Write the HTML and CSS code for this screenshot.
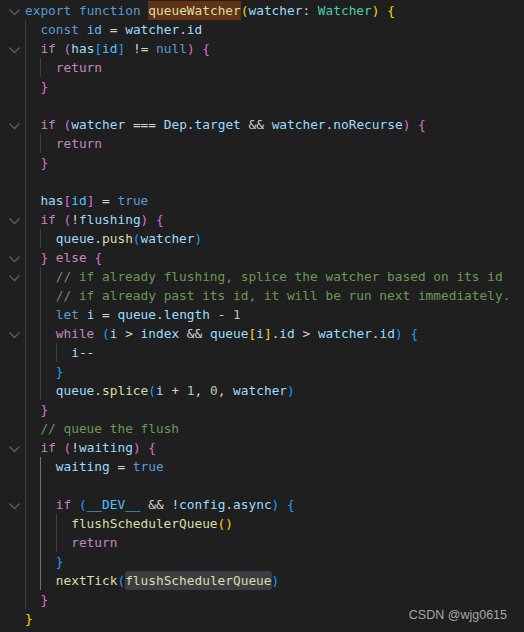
FILE: index.html
```html
<!DOCTYPE html>
<html>
<head>
<meta charset="utf-8">
<link rel="stylesheet" href="styles.css">
</head>
<body>
<div class="editor">
  <div class="ln"><span class="gut"><svg class="fold" viewBox="0 0 16 16"><polyline points="3.5,6.5 8.5,11.5 13.5,6.5"/></svg></span><span class="code"><span class="kw">export</span> <span class="kw">function</span> <span class="hl fn">queueWatcher</span><span class="b1">(</span><span class="v">watcher</span>: <span class="t">Watcher</span><span class="b1">)</span> <span class="b1">{</span></span></div>
  <div class="ln"><span class="gut"></span><span class="g"></span><span class="code"><span class="kw">const</span> <span class="c">id</span> = <span class="v">watcher</span>.<span class="v">id</span></span></div>
  <div class="ln"><span class="gut"><svg class="fold" viewBox="0 0 16 16"><polyline points="3.5,6.5 8.5,11.5 13.5,6.5"/></svg></span><span class="g"></span><span class="code"><span class="ctl">if</span> <span class="b2">(</span><span class="v">has</span><span class="b3">[</span><span class="c">id</span><span class="b3">]</span> != <span class="kw">null</span><span class="b2">)</span> <span class="b2">{</span></span></div>
  <div class="ln"><span class="gut"></span><span class="g"></span><span class="g"></span><span class="code"><span class="ctl">return</span></span></div>
  <div class="ln"><span class="gut"></span><span class="g"></span><span class="code"><span class="b2">}</span></span></div>
  <div class="ln"><span class="gut"></span><span class="g"></span></div>
  <div class="ln"><span class="gut"><svg class="fold" viewBox="0 0 16 16"><polyline points="3.5,6.5 8.5,11.5 13.5,6.5"/></svg></span><span class="g"></span><span class="code"><span class="ctl">if</span> <span class="b2">(</span><span class="v">watcher</span> === <span class="v">Dep</span>.<span class="v">target</span> &amp;&amp; <span class="v">watcher</span>.<span class="v">noRecurse</span><span class="b2">)</span> <span class="b2">{</span></span></div>
  <div class="ln"><span class="gut"></span><span class="g"></span><span class="g"></span><span class="code"><span class="ctl">return</span></span></div>
  <div class="ln"><span class="gut"></span><span class="g"></span><span class="code"><span class="b2">}</span></span></div>
  <div class="ln"><span class="gut"></span><span class="g"></span></div>
  <div class="ln"><span class="gut"></span><span class="g"></span><span class="code"><span class="v">has</span><span class="b2">[</span><span class="c">id</span><span class="b2">]</span> = <span class="kw">true</span></span></div>
  <div class="ln"><span class="gut"><svg class="fold" viewBox="0 0 16 16"><polyline points="3.5,6.5 8.5,11.5 13.5,6.5"/></svg></span><span class="g"></span><span class="code"><span class="ctl">if</span> <span class="b2">(</span>!<span class="v">flushing</span><span class="b2">)</span> <span class="b2">{</span></span></div>
  <div class="ln"><span class="gut"></span><span class="g"></span><span class="g"></span><span class="code"><span class="v">queue</span>.<span class="fn">push</span><span class="b3">(</span><span class="v">watcher</span><span class="b3">)</span></span></div>
  <div class="ln"><span class="gut"><svg class="fold" viewBox="0 0 16 16"><polyline points="3.5,6.5 8.5,11.5 13.5,6.5"/></svg></span><span class="g"></span><span class="code"><span class="b2">}</span> <span class="ctl">else</span> <span class="b2">{</span></span></div>
  <div class="ln"><span class="gut"><svg class="fold" viewBox="0 0 16 16"><polyline points="3.5,6.5 8.5,11.5 13.5,6.5"/></svg></span><span class="g"></span><span class="g"></span><span class="code cm">// if already flushing, splice the watcher based on its id</span></div>
  <div class="ln"><span class="gut"></span><span class="g"></span><span class="g"></span><span class="code cm">// if already past its id, it will be run next immediately.</span></div>
  <div class="ln"><span class="gut"></span><span class="g"></span><span class="g"></span><span class="code"><span class="kw">let</span> <span class="v">i</span> = <span class="v">queue</span>.<span class="v">length</span> - <span class="n">1</span></span></div>
  <div class="ln"><span class="gut"><svg class="fold" viewBox="0 0 16 16"><polyline points="3.5,6.5 8.5,11.5 13.5,6.5"/></svg></span><span class="g"></span><span class="g"></span><span class="code"><span class="ctl">while</span> <span class="b3">(</span><span class="v">i</span> &gt; <span class="v">index</span> &amp;&amp; <span class="v">queue</span><span class="b1">[</span><span class="v">i</span><span class="b1">]</span>.<span class="v">id</span> &gt; <span class="v">watcher</span>.<span class="v">id</span><span class="b3">)</span> <span class="b3">{</span></span></div>
  <div class="ln"><span class="gut"></span><span class="g"></span><span class="g"></span><span class="g"></span><span class="code"><span class="v">i</span>--</span></div>
  <div class="ln"><span class="gut"></span><span class="g"></span><span class="g"></span><span class="code"><span class="b3">}</span></span></div>
  <div class="ln"><span class="gut"></span><span class="g"></span><span class="g"></span><span class="code"><span class="v">queue</span>.<span class="fn">splice</span><span class="b3">(</span><span class="v">i</span> + <span class="n">1</span>, <span class="n">0</span>, <span class="v">watcher</span><span class="b3">)</span></span></div>
  <div class="ln"><span class="gut"></span><span class="g"></span><span class="code"><span class="b2">}</span></span></div>
  <div class="ln"><span class="gut"></span><span class="g"></span><span class="code cm">// queue the flush</span></div>
  <div class="ln"><span class="gut"><svg class="fold" viewBox="0 0 16 16"><polyline points="3.5,6.5 8.5,11.5 13.5,6.5"/></svg></span><span class="g"></span><span class="code"><span class="ctl">if</span> <span class="b2">(</span>!<span class="v">waiting</span><span class="b2">)</span> <span class="b2">{</span></span></div>
  <div class="ln"><span class="gut"></span><span class="g"></span><span class="g act"></span><span class="code"><span class="v">waiting</span> = <span class="kw">true</span></span></div>
  <div class="ln"><span class="gut"></span><span class="g"></span><span class="g act"></span></div>
  <div class="ln"><span class="gut"><svg class="fold" viewBox="0 0 16 16"><polyline points="3.5,6.5 8.5,11.5 13.5,6.5"/></svg></span><span class="g"></span><span class="g act"></span><span class="code"><span class="ctl">if</span> <span class="b3">(</span><span class="c">__DEV__</span> &amp;&amp; !<span class="v">config</span>.<span class="v">async</span><span class="b3">)</span> <span class="b3">{</span></span></div>
  <div class="ln"><span class="gut"></span><span class="g"></span><span class="g act"></span><span class="g"></span><span class="code"><span class="fn">flushSchedulerQueue</span><span class="b1">()</span></span></div>
  <div class="ln"><span class="gut"></span><span class="g"></span><span class="g act"></span><span class="g"></span><span class="code"><span class="ctl">return</span></span></div>
  <div class="ln"><span class="gut"></span><span class="g"></span><span class="g act"></span><span class="code"><span class="b3">}</span></span></div>
  <div class="ln"><span class="gut"></span><span class="g"></span><span class="g act"></span><span class="code"><span class="fn">nextTick</span><span class="b3">(</span><span class="sel fn">flushSchedulerQueue</span><span class="b3">)</span></span></div>
  <div class="ln"><span class="gut"></span><span class="g"></span><span class="code"><span class="b2">}</span></span></div>
  <div class="ln"><span class="gut"></span><span class="code"><span class="b1">}</span></span></div>
</div>
<div class="mark">CSDN @wjg0615</div>
</body>
</html>
```

FILE: styles.css
```css
html, body {
  margin: 0;
  padding: 0;
  background: #1f1f1f;
}
body {
  width: 524px;
  height: 632px;
  overflow: hidden;
  position: relative;
}
.editor {
  padding-top: 1px;
  font-family: "DejaVu Sans Mono", "Liberation Mono", monospace;
  font-size: 12.8px;
  color: #d4d4d4;
}
.ln {
  display: flex;
  height: 19px;
  line-height: 19px;
  white-space: pre;
}
.gut {
  flex: 0 0 25px;
  width: 25px;
  height: 19px;
  position: relative;
}
.fold {
  display: block;
  width: 16px;
  height: 16px;
  margin: 2px 0 0 6px;
  fill: none;
  stroke: #5e5e5e;
  stroke-width: 1.3;
}
.g {
  flex: 0 0 15.4px;
  width: 15.4px;
  height: 19px;
  box-shadow: inset 1px 0 0 #404040;
}
.g.act {
  box-shadow: inset 1px 0 0 #707070;
}
.code {
  white-space: pre;
}
.kw { color: #569cd6; }
.ctl { color: #c586c0; }
.fn { color: #dcdcaa; }
.v { color: #9cdcfe; }
.c { color: #4fc1ff; }
.t { color: #4ec9b0; }
.cm { color: #6a9955; }
.n { color: #b5cea8; }
.b1 { color: #ffd700; }
.b2 { color: #da70d6; }
.b3 { color: #179fff; }
.hl {
  display: inline-block;
  height: 19px;
  background: #613214;
}
.sel {
  display: inline-block;
  height: 19px;
  background: #3a3d41;
  border-radius: 3px;
}
.mark {
  position: absolute;
  right: 17px;
  top: 606px;
  font-family: "Liberation Sans", Arial, sans-serif;
  font-size: 12.5px;
  line-height: 18px;
  color: #a6a6a6;
}
```
